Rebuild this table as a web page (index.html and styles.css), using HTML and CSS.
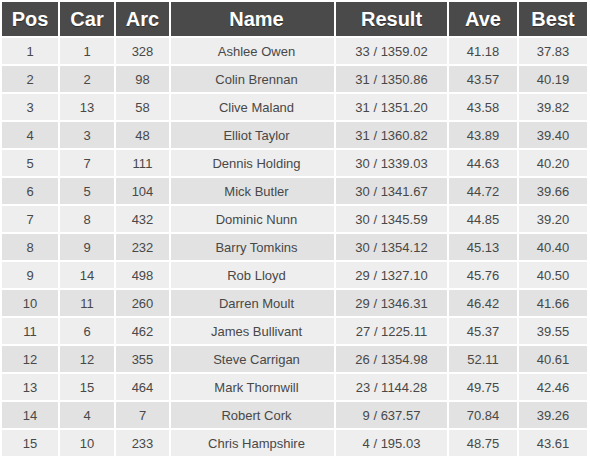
FILE: index.html
```html
<!DOCTYPE html>
<html>
<head>
<meta charset="utf-8">
<link rel="stylesheet" href="styles.css">
</head>
<body>
<table class="results">
  <colgroup>
    <col class="c-pos"><col class="c-car"><col class="c-arc"><col class="c-name"><col class="c-result"><col class="c-ave"><col class="c-best">
  </colgroup>
  <thead>
    <tr><th>Pos</th><th>Car</th><th>Arc</th><th class="name">Name</th><th>Result</th><th>Ave</th><th>Best</th></tr>
  </thead>
  <tbody>
    <tr><td>1</td><td>1</td><td>328</td><td class="name">Ashlee Owen</td><td>33 / 1359.02</td><td>41.18</td><td>37.83</td></tr>
    <tr><td>2</td><td>2</td><td>98</td><td class="name">Colin Brennan</td><td>31 / 1350.86</td><td>43.57</td><td>40.19</td></tr>
    <tr><td>3</td><td>13</td><td>58</td><td class="name">Clive Maland</td><td>31 / 1351.20</td><td>43.58</td><td>39.82</td></tr>
    <tr><td>4</td><td>3</td><td>48</td><td class="name">Elliot Taylor</td><td>31 / 1360.82</td><td>43.89</td><td>39.40</td></tr>
    <tr><td>5</td><td>7</td><td>111</td><td class="name">Dennis Holding</td><td>30 / 1339.03</td><td>44.63</td><td>40.20</td></tr>
    <tr><td>6</td><td>5</td><td>104</td><td class="name">Mick Butler</td><td>30 / 1341.67</td><td>44.72</td><td>39.66</td></tr>
    <tr><td>7</td><td>8</td><td>432</td><td class="name">Dominic Nunn</td><td>30 / 1345.59</td><td>44.85</td><td>39.20</td></tr>
    <tr><td>8</td><td>9</td><td>232</td><td class="name">Barry Tomkins</td><td>30 / 1354.12</td><td>45.13</td><td>40.40</td></tr>
    <tr><td>9</td><td>14</td><td>498</td><td class="name">Rob Lloyd</td><td>29 / 1327.10</td><td>45.76</td><td>40.50</td></tr>
    <tr><td>10</td><td>11</td><td>260</td><td class="name">Darren Moult</td><td>29 / 1346.31</td><td>46.42</td><td>41.66</td></tr>
    <tr><td>11</td><td>6</td><td>462</td><td class="name">James Bullivant</td><td>27 / 1225.11</td><td>45.37</td><td>39.55</td></tr>
    <tr><td>12</td><td>12</td><td>355</td><td class="name">Steve Carrigan</td><td>26 / 1354.98</td><td>52.11</td><td>40.61</td></tr>
    <tr><td>13</td><td>15</td><td>464</td><td class="name">Mark Thornwill</td><td>23 / 1144.28</td><td>49.75</td><td>42.46</td></tr>
    <tr><td>14</td><td>4</td><td>7</td><td class="name">Robert Cork</td><td>9 / 637.57</td><td>70.84</td><td>39.26</td></tr>
    <tr><td>15</td><td>10</td><td>233</td><td class="name">Chris Hampshire</td><td>4 / 195.03</td><td>48.75</td><td>43.61</td></tr>
  </tbody>
</table>
</body>
</html>
```
FILE: styles.css
```css
html, body {
  margin: 0;
  padding: 0;
  background: #ffffff;
}
.results {
  width: 589px;
  table-layout: fixed;
  border-collapse: separate;
  border-spacing: 2px;
  font-family: "Liberation Sans", Arial, sans-serif;
}
.c-pos { width: 56px; }
.c-car { width: 54px; }
.c-arc { width: 53px; }
.c-name { width: 163px; }
.c-result { width: 111px; }
.c-ave { width: 68px; }
.c-best { width: 68px; }
.results th {
  height: 34px;
  padding: 0;
  background: #4a4a4a;
  color: #ffffff;
  font-size: 20px;
  font-weight: bold;
  text-align: center;
  text-shadow: 0 1px 1px rgba(0, 0, 0, 0.4);
}
.results td {
  height: 26px;
  padding: 0;
  font-size: 13px;
  color: #484848;
  text-align: center;
}
.results .name {
  padding-left: 8px;
}
.results tbody tr:nth-child(odd) td {
  background: #eeeeee;
}
.results tbody tr:nth-child(even) td {
  background: #e2e2e2;
}
```
